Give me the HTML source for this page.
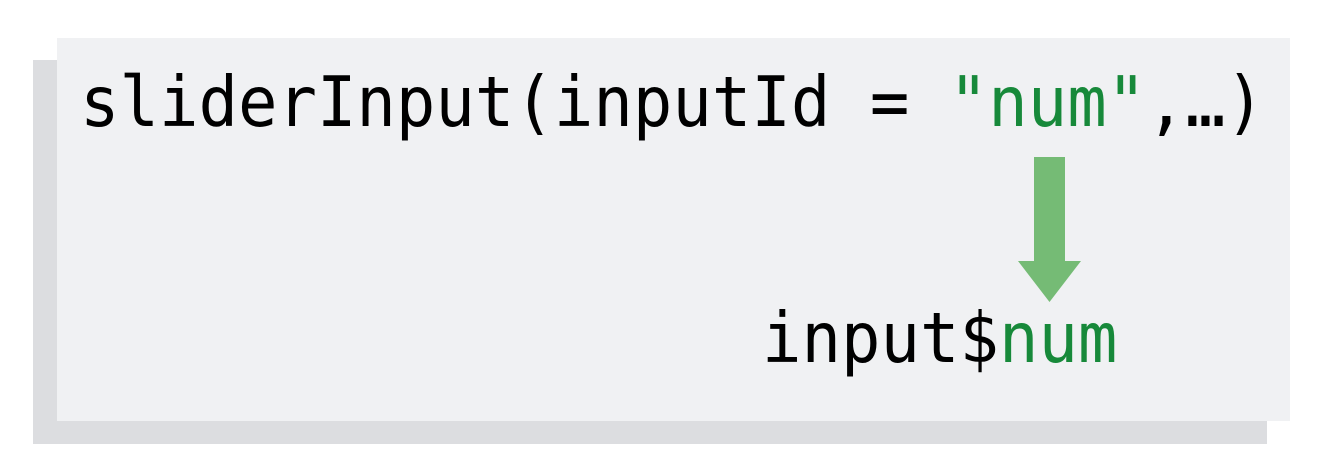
<!DOCTYPE html>
<html><head><style>
html,body{margin:0;padding:0;background:#fff;width:1328px;height:474px;overflow:hidden;position:relative}
.sh{position:absolute;left:33px;top:60px;width:1234px;height:384px;background:#dcdde0}
.bx{position:absolute;left:57px;top:38px;width:1233px;height:383px;background:#f0f1f3}
.t{position:absolute;font-family:"DejaVu Sans Mono","Liberation Mono",monospace;font-size:65.6px;line-height:1;color:#000;white-space:pre;transform:scaleY(1.06);transform-origin:0 80%}
.g{color:#17893a}
</style></head><body>
<div class="sh"></div>
<div class="bx"></div>
<div class="t" style="left:80px;top:72px">sliderInput(inputId = <span class="g">"num"</span>,…)</div>
<div class="t" style="left:762px;top:308px">input$<span class="g">num</span></div>
<svg style="position:absolute;left:0;top:0" width="1328" height="474">
<path d="M1034 157H1065V261H1081L1049.5 302L1018 261H1034Z" fill="#75bb75"/>
</svg>
</body></html>
